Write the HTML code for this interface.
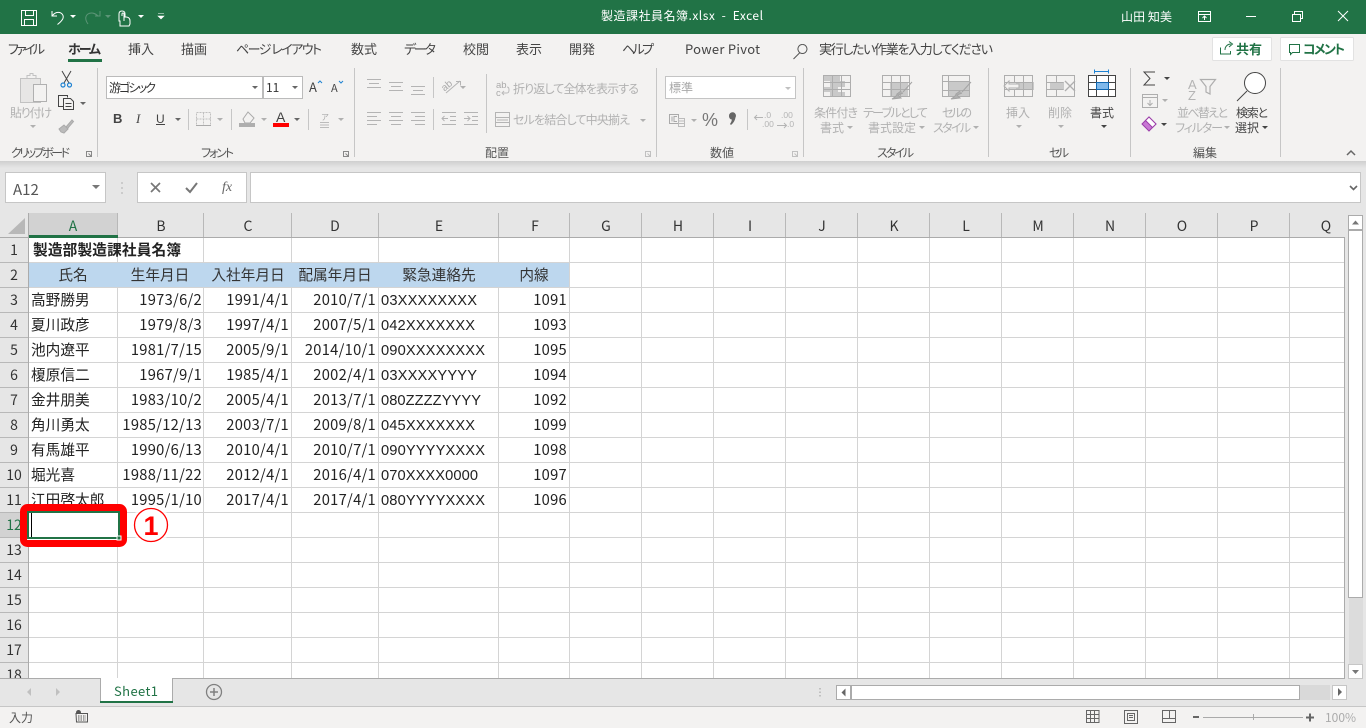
<!DOCTYPE html>
<html lang="ja"><head><meta charset="utf-8"><title>製造課社員名簿.xlsx - Excel</title>
<style>
html,body{margin:0;padding:0;width:1366px;height:728px;overflow:hidden;background:#fff}
svg{display:block;position:absolute;left:0;top:0}
text{font-family:"Liberation Sans","Noto Sans CJK JP",sans-serif;white-space:pre}
.j{font-family:"Noto Sans CJK JP",sans-serif}
.tab{font-family:"Noto Sans CJK JP",sans-serif;font-size:13px;fill:#444;font-feature-settings:"palt"}
.r{font-family:"Noto Sans CJK JP",sans-serif;font-size:12px;fill:#b1b1b1;font-feature-settings:"palt"}
.d{font-family:"Noto Sans CJK JP",sans-serif;font-size:12px;fill:#444;font-feature-settings:"palt"}
.g{font-family:"Noto Sans CJK JP",sans-serif;font-size:12px;fill:#555;font-feature-settings:"palt"}
.p{font-feature-settings:"palt"}
.c{font-family:"Noto Sans CJK JP",sans-serif;font-size:14.67px;fill:#222}
.e{font-family:"Liberation Sans",sans-serif;font-size:14.67px;fill:#222}
.n{font-family:"Noto Sans CJK JP",sans-serif;font-size:14.67px;fill:#222;text-anchor:end;letter-spacing:.3px}
.h{font-family:"Noto Sans CJK JP",sans-serif;font-size:14px;fill:#333;text-anchor:middle}
.hh{font-family:"Noto Sans CJK JP",sans-serif;font-size:14.67px;fill:#333;text-anchor:middle}
.i{fill:none;stroke:#b4b4b4;stroke-width:1}
.t{fill:#b0b0b0}
</style></head><body>
<svg width="1366" height="728" viewBox="0 0 1366 728">
<defs><linearGradient id="sh" x1="0" y1="0" x2="0" y2="1"><stop offset="0" stop-color="#cfcfcf"/><stop offset="1" stop-color="#e6e6e6"/></linearGradient></defs>
<!-- title bar -->
<rect width="1366" height="34" fill="#217346"/>
<g fill="none" stroke="#fff" stroke-width="1">
<path d="M21.500 10.500h15v15h-15z"/><path d="M25.500 10.500v5h8v-5M24.500 25.500v-6h9v6"/>
<path d="M52 11v5h5M52.500 15.500c3-4 8-4 10-1 2 3 0 6-5 10"/>
</g>
<path d="M70 15h6l-3 3z" fill="#fff"/>
<path d="M88 24c-3-4-3-8 0-10 3-2 7-1 10 2M100 11v5h-5" fill="none" stroke="#5c9577" stroke-width="1"/>
<path d="M105 15h6l-3 3z" fill="#5c9577"/>
<path d="M120 26v-5h-1v-7q0-3 3-3t3 3v3h1q4 0 4 4v3l-1 2zM122 16v-2q0-1 1-1t1 1v7" fill="none" stroke="#fff"/>
<path d="M138 15h6l-3 3z" fill="#fff"/>
<path d="M158 13.500h6M158 16h6l-3 3z" fill="#fff" stroke="#fff" stroke-width=".6"/>
<text x="601" y="20" fill="#fff" font-size="12" class="j p" textLength="162">製造課社員名簿.xlsx  -  Excel</text>
<text x="1121" y="21" fill="#fff" font-size="12" class="j" textLength="51">山田 知美</text>
<g fill="none" stroke="#fff">
<path d="M1198.500 11.500h12v10h-12zM1198.500 14.500h12M1204.500 20v-4M1202.500 18l2-2 2 2"/>
<path d="M1246 16.500h10"/>
<path d="M1292.500 14.500h8v7h-8zM1294.500 14v-2.500h8v7h-2"/>
<path d="M1338 11l10 10M1348 11l-10 10"/>
</g>
<!-- ribbon -->
<rect y="34" width="1366" height="127" fill="#f3f2f1"/>
<rect y="161" width="1366" height="52" fill="#e6e6e6"/>
<rect y="161" width="1366" height="7" fill="url(#sh)"/>
<text class="tab" x="8" y="54" textLength="37">ファイル</text>
<text class="tab" x="68" y="54" textLength="33" font-weight="700" style="fill:#333">ホーム</text>
<rect x="68" y="59" width="34" height="3" fill="#217346"/>
<text class="tab" x="128" y="54" textLength="26">挿入</text>
<text class="tab" x="181" y="54" textLength="26">描画</text>
<text class="tab" x="236" y="54" textLength="86">ページ レイアウト</text>
<text class="tab" x="351" y="54" textLength="26">数式</text>
<text class="tab" x="404" y="54" textLength="32">データ</text>
<text class="tab" x="463" y="54" textLength="26">校閲</text>
<text class="tab" x="516" y="54" textLength="26">表示</text>
<text class="tab" x="569" y="54" textLength="26">開発</text>
<text class="tab" x="622" y="54" textLength="32">ヘルプ</text>
<text class="tab" x="685" y="54" textLength="75">Power Pivot</text>
<path d="M802.500 44.500a4.500 4.500 0 1 1-.1 0M799.500 53l-6 6" fill="none" stroke="#555"/>
<text class="tab" x="819" y="54" textLength="174">実行したい作業を入力してください</text>
<!-- share buttons -->
<rect x="1212.500" y="37.500" width="59" height="23" fill="#fff" stroke="#e2e2e2" rx="1"/>
<rect x="1280.500" y="37.500" width="73" height="23" fill="#fff" stroke="#e2e2e2" rx="1"/>
<path d="M1220.500 47.500v6.500h10v-3M1225 50c0-4 3-6 6-6M1229 41.500l3.500 2.500-3.500 3" fill="none" stroke="#217346"/>
<text x="1236" y="54" font-size="13" font-weight="700" fill="#217346" class="j" textLength="26">共有</text>
<path d="M1289.500 44.500h10v8h-7l-2 2v-2h-1z" fill="none" stroke="#217346"/>
<text x="1303" y="54" font-size="13" font-weight="700" fill="#217346" class="j p" textLength="42">コメント</text>
<!-- separators -->
<g fill="#c6c6c6">
<rect x="97" y="68" width="1" height="89"/><rect x="354" y="68" width="1" height="89"/><rect x="656" y="68" width="1" height="89"/><rect x="803" y="68" width="1" height="89"/><rect x="988" y="68" width="1" height="89"/><rect x="1130" y="68" width="1" height="89"/><rect x="1280" y="68" width="1" height="89"/>
<rect x="433" y="77" width="1" height="21"/><rect x="433" y="109" width="1" height="21"/><rect x="486" y="74" width="1" height="59"/><rect x="188" y="109" width="1" height="21"/><rect x="231" y="109" width="1" height="21"/><rect x="308" y="109" width="1" height="21"/><rect x="747" y="109" width="1" height="21"/>
</g>
<!-- clipboard -->
<path d="M20.500 78.500h20v24h-20z" fill="#e7e6e5" stroke="#c2c2c2"/>
<path d="M27 78.500v-3h3v-2h3v2h3v3z" fill="#f3f2f1" stroke="#c2c2c2"/>
<rect x="33.500" y="84.500" width="13" height="17" fill="#f3f2f1" stroke="#b0b0b0"/>
<text class="r" x="10" y="117" textLength="42">貼り付け</text>
<path d="M30 125h6l-3 3z" class="t"/>
<path d="M62 71l7 12M71 71l-7 12" fill="none" stroke="#444"/>
<circle cx="63" cy="85" r="2" fill="none" stroke="#1e82d2" stroke-width="1.200"/><circle cx="69.500" cy="85" r="2" fill="none" stroke="#1e82d2" stroke-width="1.200"/>
<path d="M63.500 106.500h-5v-11h9v2M63.500 98.500h7l3 3v8h-10zM65.500 103.500h6M65.500 106.500h6" fill="#f3f2f1" stroke="#444"/>
<path d="M80 102h6l-3 3z" fill="#666"/>
<path d="M66 127l6-7 1.500 1.500-6 7" fill="#bbb" stroke="#aaa"/>
<path d="M59 129l5-4 4 4-4 4-3-1z" fill="#bbb" stroke="#aaa"/>
<text class="g" x="11" y="157" textLength="59">クリップボード</text>
<path d="M86.500 151.500h5v5h-5zM88.500 153.500l3 3" fill="none" stroke="#888"/>
<!-- font group -->
<rect x="106.500" y="76.500" width="156" height="22" fill="#fff" stroke="#bbb"/>
<rect x="263.500" y="76.500" width="39" height="22" fill="#fff" stroke="#bbb"/>
<text x="109" y="92" font-size="12" class="j p" fill="#333" textLength="47">游ゴシック</text>
<text x="266" y="92" font-size="12" class="j" fill="#333">11</text>
<path d="M252 86h6l-3 3zM292 86h6l-3 3z" fill="#666"/>
<text x="309" y="92" font-size="13" class="j" fill="#444">A</text>
<path d="M318 83l2-2 2 2" fill="none" stroke="#1e82d2"/>
<text x="331" y="92" font-size="11" class="j" fill="#444">A</text>
<path d="M339 81l2 2 2-2" fill="none" stroke="#1e82d2"/>
<text x="113" y="123" font-size="13" font-weight="700" fill="#444">B</text>
<text x="136" y="123" font-size="13" font-style="italic" fill="#444" style="font-family:'Liberation Serif',serif">I</text>
<text x="156" y="123" font-size="12" fill="#444">U</text>
<rect x="156" y="124" width="9" height="1" fill="#444"/>
<path d="M175 118h6l-3 3z" fill="#666"/>
<path d="M196.500 112.500h14v13h-14zM203.500 112.500v13M196.500 119h14" fill="none" stroke="#c0c0c0" stroke-dasharray="2 1"/>
<rect x="196" y="125" width="15" height="1" fill="#aaa"/>
<path d="M217 118h6l-3 3zM261 118h6l-3 3z" class="t"/>
<path d="M243 119l5-7 6 6-4 5h-5z" fill="#f3f2f1" stroke="#aaa"/>
<rect x="239" y="123" width="16" height="4" fill="#aeaeae"/>
<text x="276" y="122" font-size="14" fill="#444">A</text>
<rect x="273" y="123" width="16" height="4" fill="#f00"/>
<path d="M294 118h6l-3 3z" fill="#666"/>
<text x="321" y="120" font-size="8" fill="#aaa" class="j">ア</text>
<path d="M320 122.500h9M320 125h9M320 127.500h9" stroke="#bbb" fill="none"/>
<path d="M338 118h6l-3 3z" class="t"/>
<text class="g" x="201" y="157" textLength="33">フォント</text>
<path d="M343.500 151.500h5v5h-5zM345.500 153.500l3 3" fill="none" stroke="#888"/>
<!-- alignment -->
<g fill="none" stroke="#b4b4b4">
<path d="M367 79.500h14M369 83.500h10M367 87.500h14"/>
<path d="M389 82.500h14M391 86.500h10M389 90.500h14"/>
<path d="M411 86.500h14M413 90.500h10M411 94.500h14"/>
<path d="M367 112.500h14M367 116.500h10M367 120.500h14M367 124.500h10"/>
<path d="M389 112.500h14M391 116.500h10M389 120.500h14M391 124.500h10"/>
<path d="M411 112.500h14M415 116.500h10M411 120.500h14M415 124.500h10"/>
<path d="M442 112.500h14M450 116.500h6M450 120.500h6M442 124.500h14M448 118.500h-6M444.500 116l-2.500 2.500 2.500 2.500"/>
<path d="M464 112.500h14M472 116.500h6M472 120.500h6M464 124.500h14M464 118.500h6M467.500 116l2.500 2.500-2.500 2.500"/>
<path d="M446 93l14-12M456 81.500h4.500v4"/>
</g>
<text x="441" y="90" font-size="10" fill="#aaa" transform="rotate(-40 445 86)">ab</text>
<path d="M460 86h6l-3 3z" class="t"/>
<text x="496" y="88" font-size="9.500" fill="#aaa">ab</text><text x="496" y="96" font-size="9.500" fill="#aaa">c</text>
<path d="M502 93h5q2 0 2-3t-2-3M504 91l-2 2 2 2" fill="none" stroke="#bbb"/>
<text class="r" x="513" y="93" textLength="126">折り返して全体を表示する</text>
<path d="M495.500 112.500h14v14h-14zM495.500 117.500h14M495.500 122.500h14M497 120h11" fill="none" stroke="#b4b4b4"/>
<text class="r" x="513" y="124" textLength="117">セルを結合して中央揃え</text>
<path d="M640 119h6l-3 3z" class="t"/>
<text class="g" x="485" y="157" textLength="24">配置</text>
<path d="M645.500 151.500h5v5h-5zM647.500 153.500l3 3" fill="none" stroke="#c0c0c0"/>
<!-- number -->
<rect x="665.500" y="76.500" width="130" height="22" fill="#fff" stroke="#c4c4c4"/>
<text x="669" y="92" font-size="12" class="j" fill="#a8a8a8">標準</text>
<path d="M785 87h6l-3 3z" fill="#c0c0c0"/>
<path d="M669.500 114.500h9v9h-9zM672 116.500v5M677 116.500h-3v5h3" fill="none" stroke="#aaa"/>
<path d="M678.500 118.500h6v8h-6zM678.500 121h6M678.500 123.500h6" fill="none" stroke="#bbb"/>
<path d="M691 119h6l-3 3z" class="t"/>
<text x="702" y="126" font-size="18" fill="#777">%</text>
<path d="M729 116a3.500 3.500 0 1 1 6.500 1.500c-.5 3-2 5.500-4.500 7.500l-1-1c1-1.500 1.800-3 1.800-4.500-1.500 0-2.800-1.500-2.800-3.500z" fill="#666"/>
<text x="764" y="118" font-size="8.500" fill="#b4b4b4">.0</text><text x="762" y="127" font-size="8.500" fill="#b4b4b4">.00</text>
<path d="M755 117.500h8M757 115l-2.500 2.500 2.500 2.500" fill="none" stroke="#b4b4b4"/>
<text x="781" y="118" font-size="8.500" fill="#b4b4b4">.00</text><text x="787" y="127" font-size="8.500" fill="#b4b4b4">.0</text>
<path d="M777 125.500h9M784 123l2.500 2.500-2.500 2.500" fill="none" stroke="#b4b4b4"/>
<text class="g" x="710" y="157" textLength="24">数値</text>
<path d="M792.500 151.500h5v5h-5zM794.500 153.500l3 3" fill="none" stroke="#c0c0c0"/>
<!-- styles -->
<rect x="823" y="76" width="17" height="5" fill="#c9c9c9"/><rect x="830" y="81" width="15" height="6" fill="#c9c9c9"/><rect x="830" y="92" width="15" height="5" fill="#c9c9c9"/><rect x="823" y="87" width="15" height="5" fill="#c9c9c9"/>
<path d="M823.500 75.500h27v21h-27zM823.500 82.500h27M823.500 89.500h27M832.500 75.500v21M841.500 75.500v21" fill="none" stroke="#aeaeae"/>
<rect x="890" y="83" width="18" height="14" fill="#c9c9c9"/>
<path d="M882.500 75.500h27v21h-27zM882.500 82.500h27M882.500 89.500h27M891.500 75.500v21M900.500 75.500v21" fill="none" stroke="#aeaeae"/>
<path d="M912 82l-9 10M903 93l-5 2 3 3-9 1q5-3 5-5l4-3" fill="#b0b0b0" stroke="#a4a4a4"/>
<rect x="948" y="81" width="22" height="15" fill="#c9c9c9"/>
<path d="M942.500 75.500h27v21h-27zM942.500 81.500h27M942.500 90.500h27M948.500 75.500v21" fill="none" stroke="#aeaeae"/>
<path d="M971 82l-9 10M962 93l-5 2 3 3-9 1q5-3 5-5l4-3" fill="#b0b0b0" stroke="#a4a4a4"/>
<text class="r" x="814" y="117" textLength="44">条件付き</text>
<text class="r" x="820" y="132" textLength="24">書式</text>
<path d="M847 126h6l-3 3z" class="t"/>
<text class="r" x="863" y="117" textLength="65">テーブルとして</text>
<text class="r" x="868" y="132" textLength="48">書式設定</text>
<path d="M919 126h6l-3 3z" class="t"/>
<text class="r" x="942" y="117" textLength="30">セルの</text>
<text class="r" x="933" y="132" textLength="38">スタイル</text>
<path d="M973 126h6l-3 3z" class="t"/>
<text class="g" x="877" y="157" textLength="37">スタイル</text>
<!-- cells -->
<rect x="1016" y="82" width="18" height="8" fill="#c9c9c9"/>
<path d="M1004.500 75.500h28v21h-28zM1004.500 82.500h28M1004.500 89.500h28M1023.500 75.500v21M1014.500 75.500v7M1014.500 89.500v7" fill="none" stroke="#aeaeae"/>
<path d="M1004 86l5-5v3h10v4h-10v3z" fill="#f3f2f1" stroke="#aeaeae"/>
<rect x="1050" y="82" width="14" height="8" fill="#c9c9c9"/>
<path d="M1046.500 75.500h28v21h-28zM1046.500 82.500h17M1046.500 89.500h17M1056.500 75.500v7M1056.500 89.500v7" fill="none" stroke="#aeaeae"/>
<path d="M1065 81l10 10M1075 81l-10 10" fill="none" stroke="#aeaeae" stroke-width="1.300"/>
<rect x="1088" y="75" width="27" height="22" fill="#fff"/>
<rect x="1096" y="82" width="13" height="8" fill="#7fb8ea"/>
<path d="M1088.500 75.500h27v21h-27zM1088.500 82.500h27M1088.500 89.500h27M1096.500 75.500v21M1108.500 75.500v21" fill="none" stroke="#444"/>
<path d="M1096.500 82.500h12v7h-12z" fill="none" stroke="#0e66b0"/>
<path d="M1094 71.500h15M1094.500 69.500v4M1108.500 69.500v4" fill="none" stroke="#1e82d2"/>
<text class="r" x="1006" y="117" textLength="24">挿入</text>
<path d="M1016 125h6l-3 3z" class="t"/>
<text class="r" x="1048" y="117" textLength="24">削除</text>
<path d="M1058 125h6l-3 3z" class="t"/>
<text class="d" x="1090" y="117" textLength="24">書式</text>
<path d="M1101 125h6l-3 3z" fill="#444"/>
<text class="g" x="1049" y="157" textLength="20">セル</text>
<!-- editing -->
<path d="M1155 72h-11l6 6.500-6 6.500h11" fill="none" stroke="#444"/>
<path d="M1164 77h6l-3 3z" fill="#444"/>
<path d="M1142.500 94.500h15v13h-15zM1142.500 97.500h15M1150 100v5M1147.500 103l2.500 2.500 2.500-2.500" fill="none" stroke="#aeaeae"/>
<path d="M1162 99h6l-3 3z" class="t"/>
<path d="M1142 124l7-7 7 7-7 7z" fill="#c878d4" stroke="#9c3eaa"/>
<path d="M1149 117l7 7-3.500 3.500-7-7z" fill="#fff" stroke="#9c3eaa"/>
<path d="M1161 123h6l-3 3z" fill="#444"/>
<text x="1188" y="89" font-size="13" fill="#b4b4b4">A</text>
<text x="1188" y="100" font-size="13" fill="#b4b4b4">Z</text>
<path d="M1200.500 79.500h15l-5.500 7v7.500l-4-2v-5.500z" fill="none" stroke="#aeaeae" stroke-width="1.200"/>
<text class="r" x="1177" y="117" textLength="51">並べ替えと</text>
<text class="r" x="1175" y="132" textLength="48">フィルター</text>
<path d="M1224 126h6l-3 3z" class="t"/>
<circle cx="1255" cy="83" r="10.500" fill="#fff" stroke="#444"/>
<path d="M1247 91l-10 10" stroke="#444" fill="none"/>
<text class="d" x="1236" y="117" textLength="32">検索と</text>
<text class="d" x="1235" y="132" textLength="24">選択</text>
<path d="M1262 126h6l-3 3z" fill="#444"/>
<text class="g" x="1193" y="157" textLength="24">編集</text>
<path d="M1347 155l4-4 4 4" fill="none" stroke="#666" stroke-width="1.500"/>
<!-- formula bar -->
<rect x="5.500" y="172.500" width="100" height="30" fill="#fff" stroke="#c6c6c6"/>
<text x="13" y="195" font-size="15" class="j" fill="#555">A12</text>
<path d="M92 185h8l-4 4z" fill="#777"/>
<path d="M122 182v2M122 187v2M122 192v2" stroke="#b0b0b0" fill="none"/>
<rect x="137.500" y="172.500" width="109" height="30" fill="#fff" stroke="#c6c6c6"/>
<path d="M151 183l9 9M160 183l-9 9" stroke="#777" stroke-width="1.700" fill="none"/>
<path d="M186 188l4 4 7-9" stroke="#777" stroke-width="2" fill="none"/>
<text x="222" y="191" font-size="14" font-style="italic" fill="#666" style="font-family:'Liberation Serif',serif">fx</text>
<rect x="250.500" y="172.500" width="1110" height="30" fill="#fff" stroke="#c6c6c6"/>
<path d="M1350 186l3.500 3.500 3.500-3.500" stroke="#666" stroke-width="1.600" fill="none"/>
<!-- sheet header -->
<rect y="213" width="1366" height="466" fill="#e6e6e6"/>
<rect x="29" y="238" width="1316" height="441" fill="#fff"/>
<path d="M25 218v16H8z" fill="#b8b8b8"/>
<rect x="29" y="213" width="89" height="24" fill="#d2d2d2"/>
<rect x="0" y="513" width="28" height="24" fill="#d2d2d2"/>
<!-- blue header -->
<rect x="29" y="263" width="541" height="25" fill="#bdd7ee"/>
<!-- grid -->
<g stroke="#d4d4d4" stroke-width="1" fill="none" shape-rendering="crispEdges">
<path d="M29 262.500H1345M570 287.500H1345M29 312.500H1345M29 337.500H1345M29 362.500H1345M29 387.500H1345M29 412.500H1345M29 437.500H1345M29 462.500H1345M29 487.500H1345M29 512.500H1345M29 537.500H1345M29 562.500H1345M29 587.500H1345M29 612.500H1345M29 637.500H1345M29 662.500H1345M29 287.500H570"/>
<path d="M117.500 238V263M203.500 238V263M291.500 238V263M378.500 238V263M498.500 238V263M569.500 238V678M641.500 238V678M713.500 238V678M785.500 238V678M857.500 238V678M929.500 238V678M1001.500 238V678M1073.500 238V678M1145.500 238V678M1217.500 238V678M1289.500 238V678"/>
<path d="M117.500 288V678M203.500 288V678M291.500 288V678M378.500 288V678M498.500 288V678"/>
</g>
<g stroke="#b8b8b8" fill="none" shape-rendering="crispEdges">
<path d="M117.500 213V237M203.500 213V237M291.500 213V237M378.500 213V237M498.500 213V237M569.500 213V237M641.500 213V237M713.500 213V237M785.500 213V237M857.500 213V237M929.500 213V237M1001.500 213V237M1073.500 213V237M1145.500 213V237M1217.500 213V237M1289.500 213V237"/>
<path d="M0 262.500H28M0 287.500H28M0 312.500H28M0 337.500H28M0 362.500H28M0 387.500H28M0 412.500H28M0 437.500H28M0 462.500H28M0 487.500H28M0 512.500H28M0 537.500H28M0 562.500H28M0 587.500H28M0 612.500H28M0 637.500H28M0 662.500H28"/>
</g>
<rect x="0" y="237" width="1345" height="1" fill="#ababab"/>
<rect x="28" y="213" width="1" height="466" fill="#ababab"/>
<rect x="1344" y="237" width="1" height="442" fill="#ababab"/>
<rect x="29" y="235" width="89" height="3" fill="#217346"/>
<!-- column headers -->
<text class="h" x="73" y="231" style="fill:#217346">A</text><text class="h" x="161" y="231">B</text><text class="h" x="248" y="231">C</text><text class="h" x="335" y="231">D</text><text class="h" x="439" y="231">E</text><text class="h" x="535" y="231">F</text><text class="h" x="606" y="231">G</text><text class="h" x="678" y="231">H</text><text class="h" x="750" y="231">I</text><text class="h" x="822" y="231">J</text><text class="h" x="894" y="231">K</text><text class="h" x="966" y="231">L</text><text class="h" x="1038" y="231">M</text><text class="h" x="1110" y="231">N</text><text class="h" x="1182" y="231">O</text><text class="h" x="1254" y="231">P</text><text class="h" x="1326" y="231">Q</text>
<!-- row headers -->
<text class="h" x="14" y="255">1</text><text class="h" x="14" y="280">2</text><text class="h" x="14" y="305">3</text><text class="h" x="14" y="330">4</text><text class="h" x="14" y="355">5</text><text class="h" x="14" y="380">6</text><text class="h" x="14" y="405">7</text><text class="h" x="14" y="430">8</text><text class="h" x="14" y="455">9</text><text class="h" x="14" y="480">10</text><text class="h" x="14" y="505">11</text><text class="h" x="14" y="530" style="fill:#217346">12</text><text class="h" x="14" y="555">13</text><text class="h" x="14" y="580">14</text><text class="h" x="14" y="605">15</text><text class="h" x="14" y="630">16</text><text class="h" x="14" y="655">17</text><text class="h" x="14" y="680">18</text>
<!-- cell content -->
<text class="c" x="33" y="255" font-weight="700" textLength="148">製造部製造課社員名簿</text>
<text class="hh" x="73" y="280">氏名</text><text class="hh" x="160" y="280">生年月日</text><text class="hh" x="248" y="280">入社年月日</text><text class="hh" x="335" y="280">配属年月日</text><text class="hh" x="439" y="280">緊急連絡先</text><text class="hh" x="534" y="280">内線</text>
<text class="c" x="31" y="305">高野勝男</text><text class="n" x="202" y="305">1973/6/2</text><text class="n" x="289" y="305">1991/4/1</text><text class="n" x="376" y="305">2010/7/1</text><text class="e" x="381" y="305" textLength="96">03XXXXXXXX</text><text class="n" x="567" y="305">1091</text>
<text class="c" x="31" y="330">夏川政彦</text><text class="n" x="202" y="330">1979/8/3</text><text class="n" x="289" y="330">1997/4/1</text><text class="n" x="376" y="330">2007/5/1</text><text class="e" x="381" y="330" textLength="94">042XXXXXXX</text><text class="n" x="567" y="330">1093</text>
<text class="c" x="31" y="355">池内遼平</text><text class="n" x="202" y="355">1981/7/15</text><text class="n" x="289" y="355">2005/9/1</text><text class="n" x="376" y="355">2014/10/1</text><text class="e" x="381" y="355" textLength="104">090XXXXXXXX</text><text class="n" x="567" y="355">1095</text>
<text class="c" x="31" y="380">榎原信二</text><text class="n" x="202" y="380">1967/9/1</text><text class="n" x="289" y="380">1985/4/1</text><text class="n" x="376" y="380">2002/4/1</text><text class="e" x="381" y="380" textLength="96">03XXXXYYYY</text><text class="n" x="567" y="380">1094</text>
<text class="c" x="31" y="405">金井朋美</text><text class="n" x="202" y="405">1983/10/2</text><text class="n" x="289" y="405">2005/4/1</text><text class="n" x="376" y="405">2013/7/1</text><text class="e" x="381" y="405" textLength="100">080ZZZZYYYY</text><text class="n" x="567" y="405">1092</text>
<text class="c" x="31" y="430">角川勇太</text><text class="n" x="202" y="430">1985/12/13</text><text class="n" x="289" y="430">2003/7/1</text><text class="n" x="376" y="430">2009/8/1</text><text class="e" x="381" y="430" textLength="94">045XXXXXXX</text><text class="n" x="567" y="430">1099</text>
<text class="c" x="31" y="455">有馬雄平</text><text class="n" x="202" y="455">1990/6/13</text><text class="n" x="289" y="455">2010/4/1</text><text class="n" x="376" y="455">2010/7/1</text><text class="e" x="381" y="455" textLength="104">090YYYYXXXX</text><text class="n" x="567" y="455">1098</text>
<text class="c" x="31" y="480">堀光喜</text><text class="n" x="202" y="480">1988/11/22</text><text class="n" x="289" y="480">2012/4/1</text><text class="n" x="376" y="480">2016/4/1</text><text class="e" x="381" y="480" textLength="97">070XXXX0000</text><text class="n" x="567" y="480">1097</text>
<text class="c" x="31" y="505">江田啓太郎</text><text class="n" x="202" y="505">1995/1/10</text><text class="n" x="289" y="505">2017/4/1</text><text class="n" x="376" y="505">2017/4/1</text><text class="e" x="381" y="505" textLength="104">080YYYYXXXX</text><text class="n" x="567" y="505">1096</text>
<!-- selection & annotation -->
<rect x="23.500" y="507.500" width="100" height="36" rx="4" fill="#fff" stroke="#f00" stroke-width="7"/>
<rect x="28" y="512" width="91" height="26" fill="#fff" stroke="#217346" stroke-width="2"/>
<rect x="117" y="536" width="4" height="4" fill="#217346" stroke="#fff" stroke-width="1"/>
<rect x="31" y="513" width="1" height="24" fill="#000"/>
<circle cx="151" cy="525" r="20" fill="#fff" opacity=".75"/>
<circle cx="151" cy="525" r="16.500" fill="#fff" stroke="#f00" stroke-width="1.300"/>
<text x="151" y="535" font-size="27" font-weight="700" fill="#f00" text-anchor="middle">1</text>
<!-- vertical scrollbar -->
<rect x="1348.500" y="215.500" width="14" height="14" fill="#fff" stroke="#ababab"/>
<path d="M1352 224.500l3.500-4 3.500 4z" fill="#777"/>
<rect x="1348.500" y="230.500" width="14" height="367" fill="#fff" stroke="#ababab"/>
<rect x="1349" y="598" width="14" height="66" fill="#dcdcdc"/>
<rect x="1348.500" y="664.500" width="14" height="14" fill="#fff" stroke="#c6c6c6"/>
<path d="M1352 670h7l-3.500 4z" fill="#777"/>
<!-- sheet tabs -->
<rect x="0" y="679" width="1366" height="27" fill="#e6e6e6"/>
<rect x="0" y="678" width="1345" height="1" fill="#ababab"/>
<rect x="100" y="678" width="73" height="25" fill="#fff"/>
<path d="M100.500 678v25M172.500 678v25" stroke="#ababab" fill="none"/>
<rect x="100" y="701" width="73" height="2" fill="#217346"/>
<text x="114" y="696" font-size="13" class="j" fill="#217346" textLength="44">Sheet1</text>
<path d="M31 688v8l-4-4zM56 688v8l4-4z" fill="#c0c0c0"/>
<circle cx="214" cy="692" r="7.500" fill="none" stroke="#808080" stroke-width="1.300"/>
<path d="M210 692h8M214 688v8" stroke="#808080" stroke-width="1.500" fill="none"/>
<path d="M820 688v1.500M820 691.500v1.500M820 695v1.500" stroke="#999" fill="none"/>
<rect x="836.500" y="685.500" width="14" height="14" fill="#fff" stroke="#ababab"/>
<path d="M845.500 688.500v8l-4-4z" fill="#666"/>
<rect x="851.500" y="685.500" width="448" height="14" fill="#fff" stroke="#ababab"/>
<rect x="1300" y="685" width="30" height="15" fill="#d9d9d9"/>
<rect x="1332.500" y="685.500" width="14" height="14" fill="#fff" stroke="#c6c6c6"/>
<path d="M1338 688v8l4-4z" fill="#666"/>
<!-- status bar -->
<rect x="0" y="706" width="1366" height="22" fill="#f3f2f1"/>
<rect x="0" y="706" width="1366" height="1" fill="#c6c6c6"/>
<text x="9" y="722" font-size="12" class="j" fill="#555">入力</text>
<circle cx="78.500" cy="712.500" r="2.500" fill="#555"/>
<path d="M76 713.500h11.500v8.500h-11z" fill="#f3f2f1" stroke="#555"/>
<path d="M78 716h8M78 718h8M78 720h8" stroke="#555" stroke-dasharray="1.500 1" fill="none"/>
<path d="M1086.500 710.500h12.500v12h-12.500zM1086.500 714.500h12.500M1086.500 718.500h12.500M1090.500 710.500v12M1094.500 710.500v12" fill="none" stroke="#666"/>
<path d="M1124.500 710.500h13v13h-13zM1127.500 713.500h7v7h-7zM1129 715.500h4M1129 717.500h4" fill="none" stroke="#666"/>
<path d="M1162.500 710.500h13v12h-13zM1162.500 718.500h13M1169.500 710.500v8" fill="none" stroke="#666"/>
<rect x="1193" y="716" width="6" height="2" fill="#666"/>
<rect x="1203" y="717" width="100" height="1" fill="#aaa"/>
<rect x="1253" y="714" width="1" height="6" fill="#aaa"/>
<path d="M1306 717.500h8M1310 713.500v8" stroke="#666" stroke-width="2" fill="none"/>
<text x="1325" y="722" font-size="12" class="j" fill="#aaa">100%</text>
</svg>
</body></html>
